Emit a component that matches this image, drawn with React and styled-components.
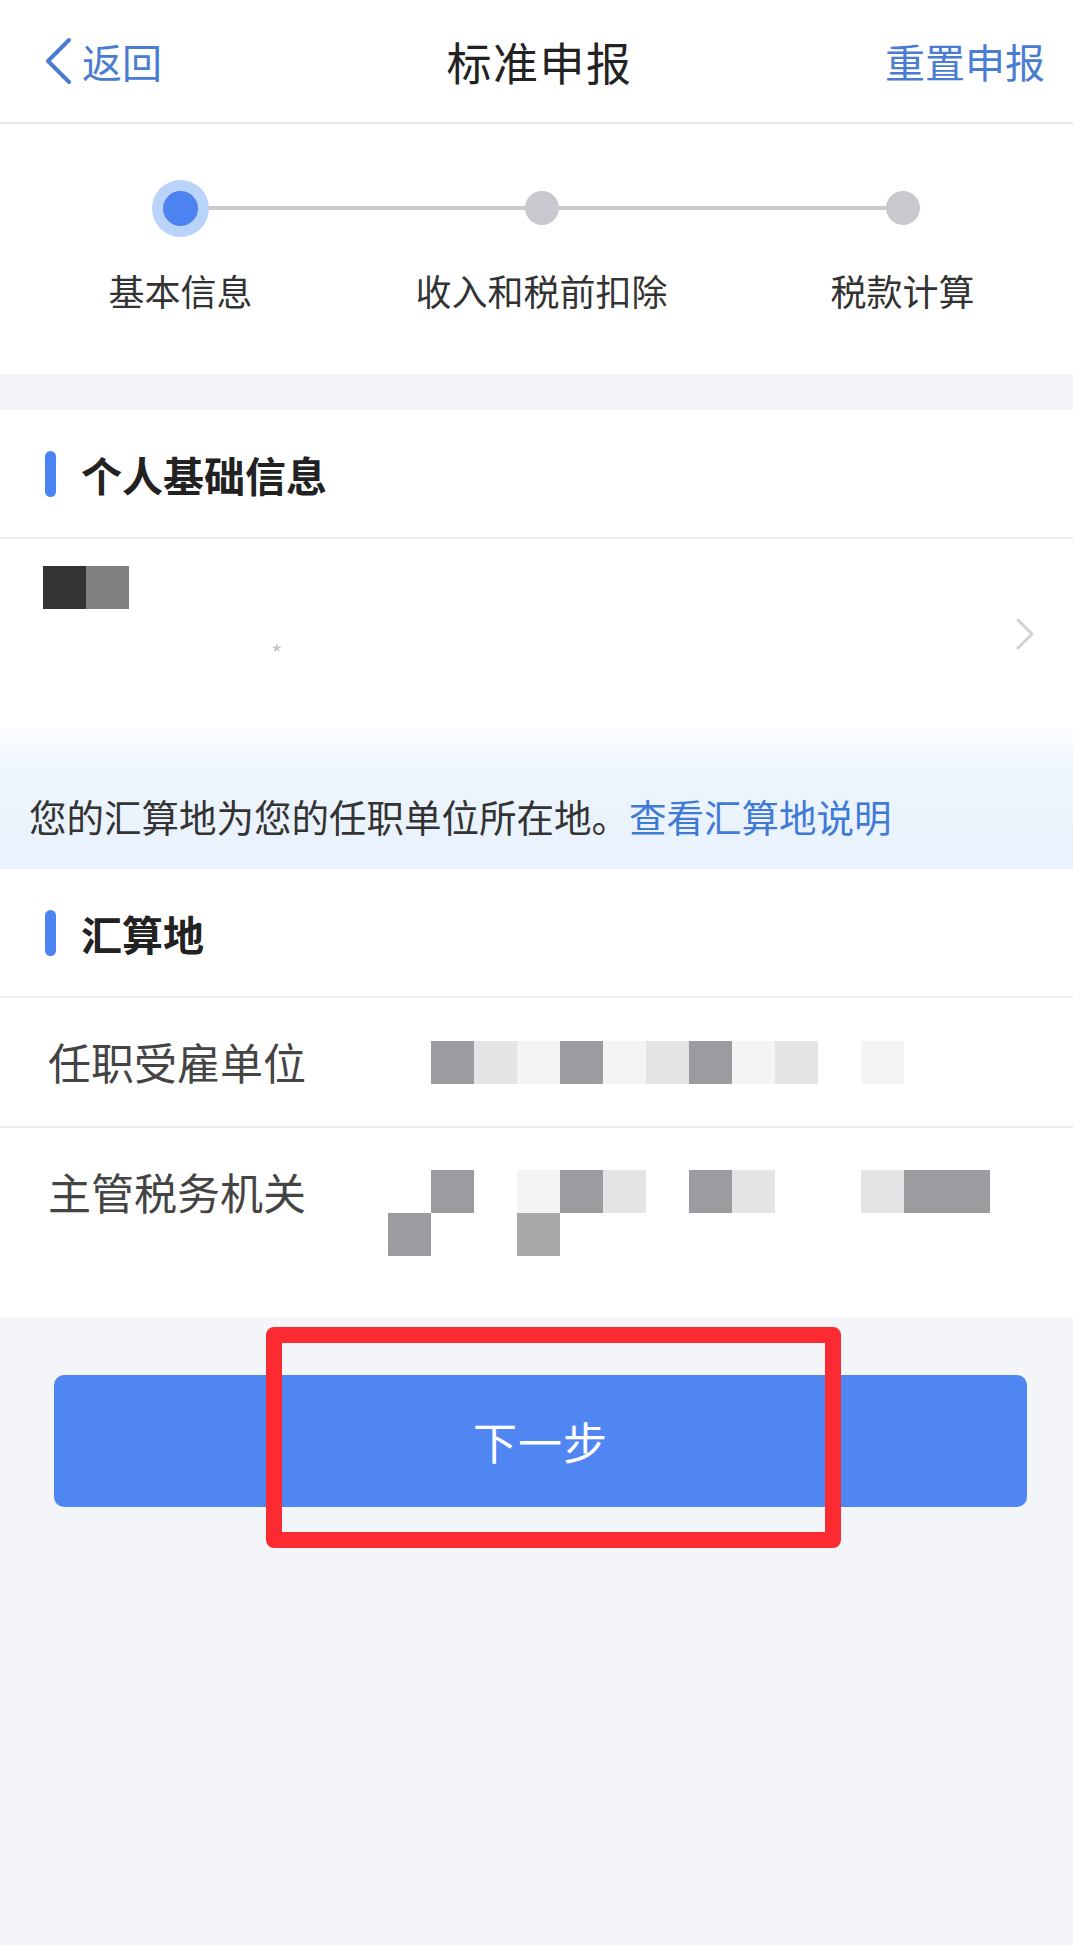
import React from 'react';
import styled, { createGlobalStyle } from 'styled-components';

const GlobalStyle = createGlobalStyle`
  html, body {
    margin: 0;
    padding: 0;
    background: #f4f5f9;
  }
  body {
    font-family: "Noto Sans CJK SC", "Noto Sans", sans-serif;
    color: #222;
  }
`;

const Page = styled.div`
  width: 1073px;
  min-height: 1945px;
  background: #f4f5f9;
  overflow: hidden;
`;

const Header = styled.header`
  height: 122px;
  display: grid;
  grid-template-columns: 1fr auto 1fr;
  align-items: center;
  background: #fff;
  border-bottom: 2px solid #e6e6e8;
`;

const Back = styled.div`
  display: flex;
  align-items: center;
  gap: 10px;
  padding-left: 44px;
  color: #4a7dd1;
  font-size: 40px;
`;

const Title = styled.h1`
  margin: 0;
  font-size: 45px;
  font-weight: 400;
  color: #222;
  letter-spacing: 1.5px;
  padding-left: 6px;
`;

const Reset = styled.div`
  justify-self: end;
  padding-right: 28px;
  color: #4a7dd1;
  font-size: 40px;
`;

const Steps = styled.section`
  display: grid;
  grid-template-columns: repeat(3, 361px);
  padding: 55px 0 59px;
  background: #fff;
`;

const Step = styled.div`
  position: relative;
  display: flex;
  flex-direction: column;
  align-items: center;
  gap: 28px;

  &::before, &::after {
    content: '';
    position: absolute;
    top: 27px;
    height: 4px;
    width: 50%;
    background: #c9cacd;
  }
  &::before {
    left: 0;
    display: ${p => (p.$first ? 'none' : 'block')};
  }
  &::after {
    right: 0;
    display: ${p => (p.$last ? 'none' : 'block')};
  }
`;

const DotWrap = styled.div`
  position: relative;
  z-index: 1;
  height: 58px;
  display: flex;
  align-items: center;
  justify-content: center;
`;

const Dot = styled.div`
  width: ${p => (p.$active ? '35px' : '34px')};
  height: ${p => (p.$active ? '35px' : '34px')};
  border-radius: 50%;
  background: ${p => (p.$active ? '#4c83f1' : '#c8c9ce')};
  box-shadow: ${p => (p.$active ? '0 0 0 11px #bad3f9' : 'none')};
`;

const StepLabel = styled.div`
  font-size: 36px;
  line-height: 50px;
  color: #333;
  white-space: nowrap;
`;

const Card = styled.section`
  background: #fff;
  margin-top: ${p => p.$gap || 0}px;
`;

const CardTitle = styled.div`
  height: 127px;
  display: flex;
  align-items: center;
  gap: 25px;
  padding-left: 45px;
  border-bottom: 2px solid #eeeef0;
  font-size: 41px;
  font-weight: 700;
  color: #222;

  &::before {
    content: '';
    width: 11px;
    height: 46px;
    border-radius: 6px;
    background: #4a84f3;
  }
`;

const PersonRow = styled.div`
  height: 189px;
  display: flex;
  justify-content: space-between;
  align-items: center;
  padding: 0 38px 0 43px;
`;

const PersonInfo = styled.div`
  align-self: flex-start;
  padding-top: 27px;
  display: flex;
  flex-direction: column;
`;

const Masked = styled.div`
  font-size: 24px;
  line-height: 24px;
  color: #c4c4c8;
  margin: 32px 0 0 228px;
`;

const Mosaic = styled.div`
  display: grid;
  grid-template-columns: repeat(${p => p.$cols}, 43px);
  grid-auto-rows: 43px;
  margin-top: ${p => p.$offset || 0}px;
`;

const Cell = styled.div`
  background: ${p => p.$c || 'transparent'};
`;

const Notice = styled.div`
  padding: 63px 29px 28px;
  background: linear-gradient(to bottom, #fbfcff 0%, #ecf4fd 40%, #e9f2fd 100%);
  font-size: 37.5px;
  line-height: 50px;
  color: #333;
  white-space: nowrap;
`;

const Link = styled.span`
  color: #3f7bd6;
`;

const FieldRow = styled.div`
  display: flex;
  align-items: flex-start;
  padding: 34px 0 ${p => p.$bottom}px 48px;
  border-bottom: ${p => (p.$divider ? '2px solid #eeeef0' : 'none')};
`;

const FieldLabel = styled.div`
  width: 340px;
  flex-shrink: 0;
  font-size: 43px;
  line-height: 58px;
  color: #444;
`;

const Footer = styled.div`
  position: relative;
  padding: 58px 46px 0 54px;
`;

const NextButton = styled.button`
  width: 973px;
  height: 132px;
  border: none;
  border-radius: 10px;
  background: #4f86f2;
  color: #fff;
  font-family: inherit;
  font-size: 44px;
  letter-spacing: 1px;
`;

const Highlight = styled.div`
  position: absolute;
  left: 266px;
  top: 10px;
  width: 575px;
  height: 221px;
  box-sizing: border-box;
  border: 16px solid #fb2b31;
  border-radius: 8px;
  pointer-events: none;
`;

const D = '#9b9ca0';
const L = '#e4e4e6';
const V = '#f4f4f5';
const M = '#a9a9ac';

const employerCells = [null, D, L, V, D, V, L, D, V, L, null, V];
const officeCells = [
  null, D, null, V, D, L, null, D, L, null, null, L, D, D,
  D, null, null, M, null, null, null, null, null, null, null, null, null, null,
];

function MosaicBlock({ cells, cols, offset }) {
  return (
    <Mosaic $cols={cols} $offset={offset}>
      {cells.map((c, i) => <Cell key={i} $c={c} />)}
    </Mosaic>
  );
}

const steps = ['基本信息', '收入和税前扣除', '税款计算'];

export default function App() {
  return (
    <Page>
      <GlobalStyle />
      <Header>
        <Back>
          <svg width="28" height="48" viewBox="0 0 28 48" fill="none">
            <path d="M25 3 L4 24 L25 45" stroke="#4a7dd1" strokeWidth="4" strokeLinecap="round" strokeLinejoin="round" />
          </svg>
          返回
        </Back>
        <Title>标准申报</Title>
        <Reset>重置申报</Reset>
      </Header>

      <Steps>
        {steps.map((s, i) => (
          <Step key={s} $first={i === 0} $last={i === steps.length - 1}>
            <DotWrap>
              <Dot $active={i === 0} />
            </DotWrap>
            <StepLabel>{s}</StepLabel>
          </Step>
        ))}
      </Steps>

      <Card $gap={36}>
        <CardTitle>个人基础信息</CardTitle>
        <PersonRow>
          <PersonInfo>
            <MosaicBlock cols={2} cells={['#333333', '#808080']} />
            <Masked>*</Masked>
          </PersonInfo>
          <svg width="20" height="32" viewBox="0 0 20 32" fill="none">
            <path d="M3 2 L17 16 L3 30" stroke="#d2d2d6" strokeWidth="3" strokeLinecap="round" strokeLinejoin="round" />
          </svg>
        </PersonRow>
      </Card>

      <Notice>
        您的汇算地为您的任职单位所在地。<Link>查看汇算地说明</Link>
      </Notice>

      <Card>
        <CardTitle>汇算地</CardTitle>
        <FieldRow $divider $bottom={36}>
          <FieldLabel>任职受雇单位</FieldLabel>
          <MosaicBlock cols={12} cells={employerCells} offset={9} />
        </FieldRow>
        <FieldRow $bottom={61}>
          <FieldLabel>主管税务机关</FieldLabel>
          <MosaicBlock cols={14} cells={officeCells} offset={8} />
        </FieldRow>
      </Card>

      <Footer>
        <NextButton>下一步</NextButton>
        <Highlight />
      </Footer>
    </Page>
  );
}
